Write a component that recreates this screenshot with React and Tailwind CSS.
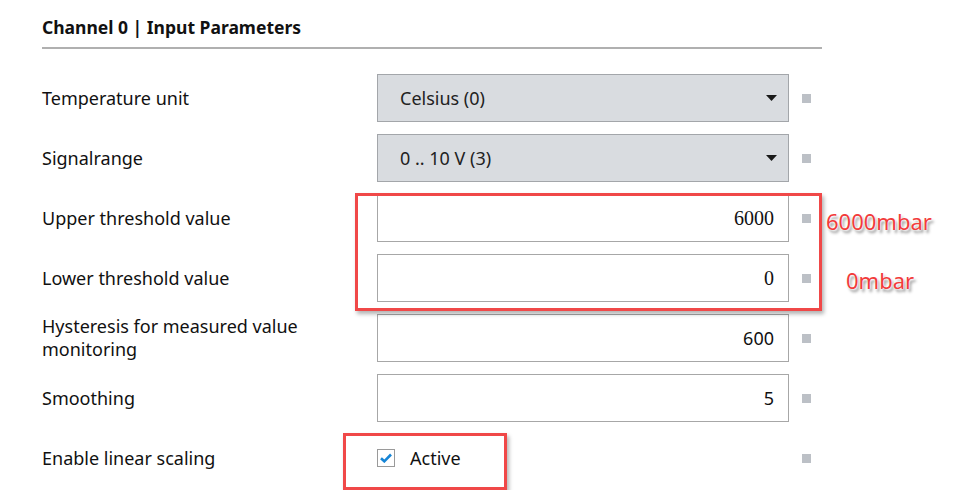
import React from "react";

const font = { fontFamily: '"Noto Sans", "Open Sans", sans-serif' };

function Square() {
  return <div className="ml-[13px] h-[9px] w-[9px] shrink-0 bg-[#bcc0c6]" />;
}

function Arrow() {
  return (
    <svg width="11" height="6" viewBox="0 0 11 6" className="shrink-0">
      <path d="M0 0 L11 0 L5.5 6 Z" fill="#1a1a1a" />
    </svg>
  );
}

function SelectRow({ label, value }) {
  return (
    <div className="flex h-[48px] items-center">
      <div className="w-[335px] shrink-0 text-[18px] text-[#111]">{label}</div>
      <div className="flex h-[48px] w-[412px] items-center justify-between border border-[#a3a6aa] bg-[#d9dce0] pl-[22px] pr-[11px] text-[18px] text-[#222]">
        <span>{value}</span>
        <Arrow />
      </div>
      <Square />
    </div>
  );
}

function InputRow({ label, value, serif }) {
  return (
    <div className="flex h-[48px] items-center">
      <div className="w-[335px] shrink-0 text-[18px] leading-[23px] text-[#111]">{label}</div>
      <div
        className={
          "flex h-[48px] w-[412px] items-center justify-end border border-[#a7a7a7] bg-white pr-[14px] text-[#111] " +
          (serif ? "text-[20px]" : "text-[18px]")
        }
        style={serif ? { fontFamily: '"Liberation Serif", serif' } : undefined}
      >
        {value}
      </div>
      <Square />
    </div>
  );
}

const annot =
  "absolute text-[22px] leading-[28px] text-[#f23b3b] [text-shadow:0_0_2px_#fff,0_0_2px_#fff,2px_3px_3px_rgba(0,0,0,0.45)]";

export default function App() {
  return (
    <div className="relative h-[490px] w-[953px] overflow-hidden bg-white" style={font}>
      <div className="ml-[42px] w-[780px]">
        <div className="flex h-[49px] items-center border-b-2 border-[#b0b0b0] pt-[7px] text-[17.5px] font-bold text-[#111]">
          Channel 0 | Input Parameters
        </div>
        <div className="mt-[25px] flex flex-col gap-[12px]">
          <SelectRow label="Temperature unit" value="Celsius (0)" />
          <SelectRow label="Signalrange" value="0 .. 10 V (3)" />
          <InputRow label="Upper threshold value" value="6000" serif />
          <InputRow label="Lower threshold value" value="0" serif />
          <InputRow
            label={
              <>
                Hysteresis for measured value
                <br />
                monitoring
              </>
            }
            value="600"
          />
          <InputRow label="Smoothing" value="5" />
          <div className="flex h-[48px] items-center">
            <div className="w-[335px] shrink-0 text-[18px] text-[#111]">Enable linear scaling</div>
            <div className="flex w-[412px] items-center">
              <div className="flex h-[18px] w-[18px] items-center justify-center border border-[#9a9a9a] bg-white">
                <svg width="12" height="10" viewBox="0 0 12 10">
                  <path d="M1 5.2 L4.3 8.3 L11 1.5" fill="none" stroke="#1685d6" strokeWidth="2.6" />
                </svg>
              </div>
              <span className="ml-[15px] text-[18px] text-[#111]">Active</span>
            </div>
            <Square />
          </div>
        </div>
      </div>

      {/* annotation overlays */}
      <div className="absolute left-[355px] top-[193px] h-[118px] w-[467px] border-[3px] border-[#f04848] shadow-[2px_3px_4px_rgba(0,0,0,0.3)]" />
      <div className="absolute left-[343px] top-[433px] h-[57px] w-[164px] border-[3px] border-[#f04848] shadow-[2px_3px_4px_rgba(0,0,0,0.3)]" />
      <div className={annot + " left-[826px] top-[207px]"}>6000mbar</div>
      <div className={annot + " left-[846px] top-[266px]"}>0mbar</div>
    </div>
  );
}
